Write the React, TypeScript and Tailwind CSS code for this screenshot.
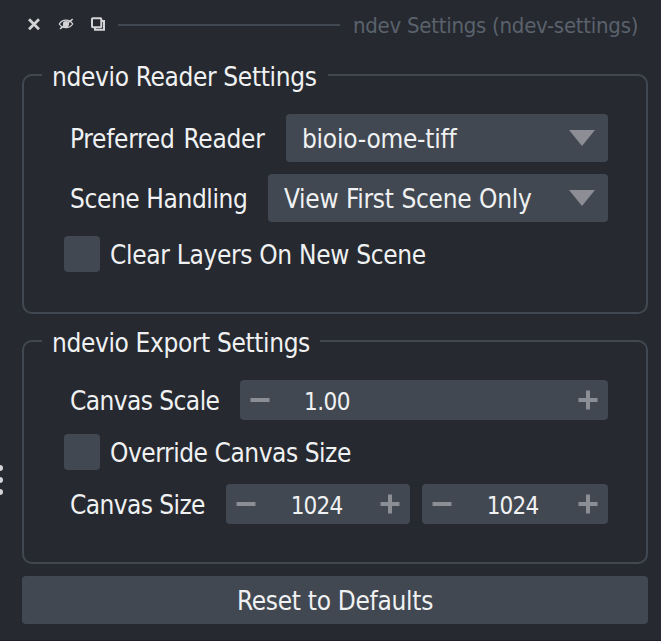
import type { ReactNode } from "react";

function Label({ className = "", children }: { className?: string; children: ReactNode }) {
  return <span className={`pt-0.5 leading-8 whitespace-nowrap ${className}`}>{children}</span>;
}

function Group({ title, legend, className, children }: { title: string; legend: string; className: string; children: ReactNode }) {
  return (
    <fieldset className={`min-w-0 rounded-[10px] border-2 border-[#414851] ${className}`}>
      <legend className={`ml-[18px] h-9 pt-1 pl-[10px] leading-8 whitespace-nowrap ${legend}`}>{title}</legend>
      {children}
    </fieldset>
  );
}

function Select({ value, tracking }: { value: string; tracking: string }) {
  return (
    <div className="flex h-12 flex-1 items-center justify-between rounded bg-[#414851] pr-[13px] pl-4">
      <Label className={tracking}>{value}</Label>
      <svg width="26" height="16" viewBox="0 0 26 16" className="shrink-0">
        <path d="M0 0H26L13 16Z" fill="#8c8d95" />
      </svg>
    </div>
  );
}

function Sign({ plus = false }: { plus?: boolean }) {
  return (
    <svg width="20" height="20" viewBox="0 0 20 20" className="shrink-0">
      <path d={plus ? "M0.5 10H19.5M10 0.5V19.5" : "M0.5 10H19.5"} stroke="#8b8e95" strokeWidth="4" />
    </svg>
  );
}

function Spin({ value, className, text }: { value: string; className: string; text: string }) {
  return (
    <div className={`flex h-10 items-center rounded bg-[#414851] px-2.5 ${className}`}>
      <Sign />
      <span className={`flex-1 pt-[3px] text-2xl leading-8 ${text}`}>{value}</span>
      <Sign plus />
    </div>
  );
}

function Check({ text, tracking, className = "" }: { text: string; tracking: string; className?: string }) {
  return (
    <div className={`-ml-1.5 flex h-9 items-center gap-2.5 ${className}`}>
      <div className="size-9 shrink-0 rounded bg-[#414851]" />
      <Label className={tracking}>{text}</Label>
    </div>
  );
}

export default function App() {
  return (
    <div className="relative flex h-[641px] w-[661px] flex-col overflow-hidden border-b border-[#221f2d] bg-[#262930] pr-[13px] pl-[22px] font-['DejaVu_Sans_Condensed','DejaVu_Sans',sans-serif] text-[26px] text-[#f0f1f2] [font-stretch:condensed]">
      <div className="absolute top-[465px] -left-[3px] flex flex-col gap-1.5">
        <i className="size-1.5 rounded-full bg-[#d4d4d6]" />
        <i className="size-1.5 rounded-full bg-[#d4d4d6]" />
        <i className="size-1.5 rounded-full bg-[#d4d4d6]" />
      </div>

      <header className="flex h-[50px] shrink-0 items-center">
        <svg width="96" height="20" viewBox="22 15 96 20" fill="none" stroke="#d4d4d6" className="shrink-0">
          <path d="M29 19.3L39 29.3M39 19.3L29 29.3" strokeWidth="2.7" />
          <path d="M59.3 24C62.5 18.8 69.5 18.8 72.7 24C69.5 28.8 62.5 28.8 59.3 24Z" strokeWidth="1.3" />
          <circle cx="66" cy="24" r="3.1" fill="#d4d4d6" stroke="none" />
          <path d="M60 28.8L72.7 19.2" strokeWidth="1.5" />
          <rect x="92" y="18.3" width="9.3" height="9" rx="0.8" strokeWidth="2" />
          <path d="M102 21H104V29.7H95V28" strokeWidth="2" />
        </svg>
        <div className="h-0.5 w-[222px] shrink-0 bg-[#414851]" />
        <Label className="ml-[13px] text-[22px] tracking-[-0.26px] text-[#5a626c]">ndev Settings (ndev-settings)</Label>
      </header>

      <Group title="ndevio Reader Settings" legend="w-[286px] tracking-[-0.35px]" className="mt-[7px] h-[257px] shrink-0">
        <div className="mt-[21px] flex flex-col gap-3 pr-[38px] pl-[46px]">
          <div className="flex items-center">
            <Label className="w-[216px] tracking-[-0.3px] [word-spacing:2px]">Preferred Reader</Label>
            <Select value="bioio-ome-tiff" tracking="tracking-[-0.25px]" />
          </div>
          <div className="flex items-center">
            <Label className="w-[198px] tracking-[-0.4px]">Scene Handling</Label>
            <Select value="View First Scene Only" tracking="tracking-[-0.3px] [word-spacing:0.7px]" />
          </div>
          <Check text="Clear Layers On New Scene" tracking="tracking-[-0.32px]" className="mt-0.5" />
        </div>
      </Group>

      <Group title="ndevio Export Settings" legend="w-[278px] tracking-[-0.37px]" className="mt-[9px] h-[241px] shrink-0">
        <div className="mt-[21px] flex flex-col gap-3.5 pr-[38px] pl-[46px]">
          <div className="flex items-center">
            <Label className="w-[170px] tracking-[-0.57px]">Canvas Scale</Label>
            <Spin value="1.00" className="flex-1" text="pl-[34px] tracking-[-0.5px]" />
          </div>
          <Check text="Override Canvas Size" tracking="tracking-[-0.45px]" />
          <div className="flex items-center">
            <Label className="w-[156px] tracking-[-0.58px]">Canvas Size</Label>
            <Spin value="1024" className="w-[184px]" text="text-center pr-[3px] tracking-[-0.8px]" />
            <Spin value="1024" className="ml-3 w-[186px]" text="text-center pr-[5px] tracking-[-0.8px]" />
          </div>
        </div>
      </Group>

      <button className="mt-3 flex h-12 shrink-0 items-center justify-center rounded bg-[#414851]">
        <Label className="tracking-[-0.3px]">Reset to Defaults</Label>
      </button>
    </div>
  );
}
